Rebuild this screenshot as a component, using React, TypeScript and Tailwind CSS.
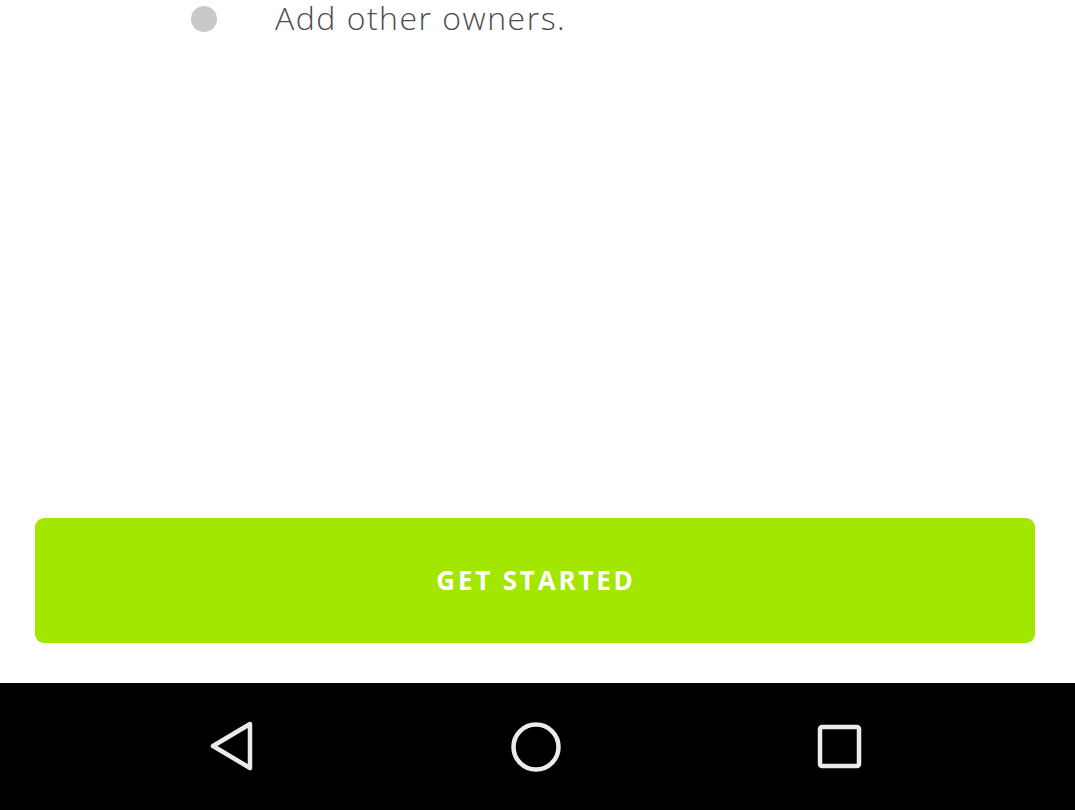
import React from 'react';

export default function App() {
  return (
    <div className="w-[1075px] h-[810px] flex flex-col bg-white overflow-hidden" style={{ fontFamily: '"Open Sans", Lato, sans-serif' }}>
      <div className="flex-1 flex flex-col">
        <div className="flex items-center h-[36px] pl-[191px]">
          <span className="w-[26px] h-[26px] rounded-full bg-[#c9c9cb] shrink-0 mt-[2px]" />
          <span className="ml-[58px] text-[32px] leading-[36px] text-[#4d4d4f] font-light tracking-[1.5px]">Add other owners.</span>
        </div>
        <div className="flex-1" />
        <div className="pl-[35px] pr-[40px] pb-[40px]">
          <button className="w-full h-[125px] rounded-[9px] bg-[#a3e600] text-white text-[26px] font-bold tracking-[2.8px] flex items-center justify-center pl-[2px]">
            GET STARTED
          </button>
        </div>
      </div>
      <div className="h-[127px] bg-black flex items-center shrink-0 pl-[209px]">
        <svg width="48" height="52" viewBox="0 0 48 52" fill="none">
          <path d="M41 3 L4 25 L41 47 Z" stroke="#ebebeb" strokeWidth="4.5" strokeLinejoin="round" />
        </svg>
        <svg width="52" height="52" viewBox="0 0 52 52" fill="none" className="ml-[253px]">
          <circle cx="26" cy="26" r="22.5" stroke="#ebebeb" strokeWidth="4.5" />
        </svg>
        <svg width="48" height="48" viewBox="0 0 48 48" fill="none" className="ml-[254px]">
          <rect x="4" y="4" width="39" height="39" rx="2" stroke="#ebebeb" strokeWidth="4.5" />
        </svg>
      </div>
    </div>
  );
}
